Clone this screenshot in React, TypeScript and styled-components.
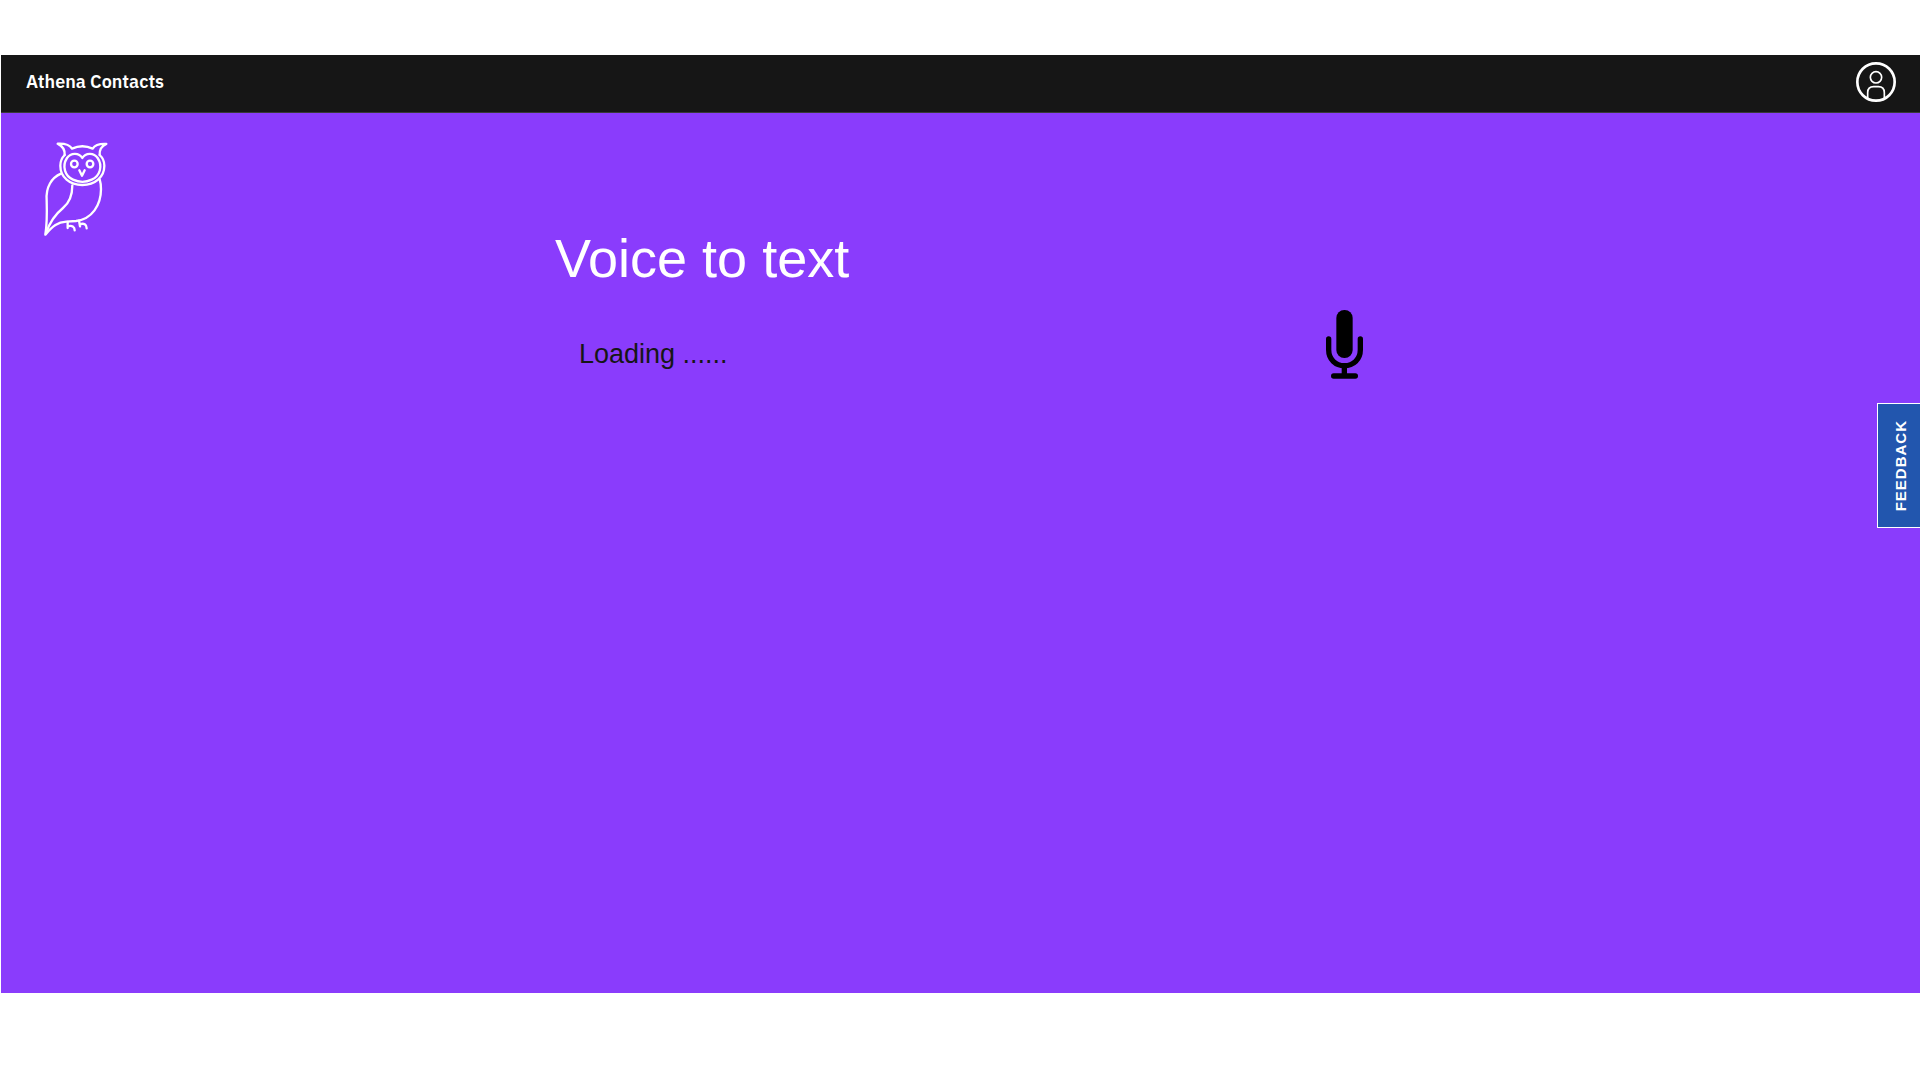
import React from "react";
import styled, { createGlobalStyle } from "styled-components";

const GlobalStyle = createGlobalStyle`
  *, *::before, *::after { box-sizing: border-box; }
  body {
    margin: 0;
    background: #ffffff;
    font-family: "Liberation Sans", Arial, sans-serif;
  }
`;

const Page = styled.div`
  display: flex;
  flex-direction: column;
  min-height: 100vh;
  padding: 55px 0 87px 1px;
`;

const Header = styled.header`
  display: flex;
  align-items: center;
  justify-content: space-between;
  height: 58px;
  padding: 0 24px 4px 25px;
  background: #161616;
  border-bottom: 1px solid #393939;
`;

const Brand = styled.a`
  color: #ffffff;
  font-family: "IBM Plex Sans", "Noto Sans", sans-serif;
  font-size: 18px;
  font-weight: 600;
  line-height: 24px;
  text-decoration: none;
`;

const IconButton = styled.button`
  display: flex;
  padding: 0;
  border: 0;
  background: transparent;
  color: inherit;
  cursor: pointer;
`;

const UserButton = styled(IconButton)`
  color: #ffffff;
`;

const Main = styled.main`
  display: grid;
  grid-template-columns: 554fr 771fr 594fr;
  align-items: start;
  flex: 1;
  background: #8a3cfc;
`;

const LogoLink = styled.a`
  display: flex;
  width: 90px;
  margin: 17px 0 0 29px;
  color: #ffffff;
`;

const Panel = styled.section`
  display: flex;
  flex-direction: column;
  gap: 44px;
  padding-top: 113px;
`;

const Title = styled.h1`
  margin: 0;
  color: #ffffff;
  font-size: 54px;
  font-weight: 400;
  line-height: 64px;
`;

const Status = styled.p`
  margin: 0;
  padding-left: 24px;
  color: #161616;
  font-size: 27px;
  line-height: 40px;
`;

const MicSlot = styled.div`
  padding-top: 197px;
  color: #000000;
`;

const Feedback = styled.button`
  position: fixed;
  top: 403px;
  right: 0;
  display: flex;
  align-items: center;
  justify-content: center;
  width: 43px;
  height: 125px;
  padding: 0 0 0 3px;
  border: 1px solid #ffffff;
  border-right: 0;
  background: #2256ae;
  color: #ffffff;
  font-family: inherit;
  font-size: 15px;
  font-weight: 700;
  line-height: 20px;
  letter-spacing: 1px;
  cursor: pointer;
`;

const FeedbackLabel = styled.span`
  writing-mode: vertical-rl;
  transform: rotate(180deg);
`;

function OwlLogo() {
  return (
    <svg width="90" height="120" viewBox="0 0 270 360" fill="none" stroke="currentColor" strokeWidth="7" strokeLinecap="round" strokeLinejoin="round" aria-hidden="true">
      <path d="M104 75 C105 60 97 48 83 41 C104 40 119 44 126 56 C145 47 169 47 188 56 C195 45 210 41 229 42 C215 48 208 60 209 75" />
      <path d="M104 75 C96 83 91 94 91 107 C91 141 119 165 157 165 C195 165 223 141 223 107 C223 94 218 83 209 75" />
      <path d="M157 84 C147 67 122 68 111 84 C95 109 105 138 129 149 C147 157 168 157 185 149 C210 138 219 108 203 84 C192 68 167 67 157 84 Z" />
      <circle cx="133" cy="102" r="10" />
      <circle cx="180" cy="102" r="10" />
      <path d="M148 121 L156 137 L164 121" />
      <path d="M93 131 C65 143 47 171 50 211 C51 245 52 278 46 314 C69 286 83 277 109 275 L138 273 C186 268 213 225 213 178 C213 165 212 157 209 148" />
      <path d="M127 166 C127 199 119 218 99 234 C77 252 58 279 48 310" />
      <path d="M113 276 L113 294 M113 289 C126 285 134 290 134 301" />
      <path d="M147 272 L150 289 M149 283 C162 278 170 284 170 295" />
    </svg>
  );
}

function UserIcon() {
  return (
    <svg width="40" height="40" viewBox="0 0 120 120" fill="none" stroke="currentColor" aria-hidden="true">
      <circle cx="60" cy="60" r="56" strokeWidth="8" />
      <circle cx="60" cy="46" r="17" strokeWidth="5" />
      <path d="M35 108 V92 C35 79 42 74 53 74 H67 C78 74 85 79 85 92 V108" strokeWidth="5" />
    </svg>
  );
}

function MicIcon() {
  return (
    <svg width="37" height="69" viewBox="0 0 111 207" fill="none" stroke="currentColor" strokeWidth="16" strokeLinecap="round" aria-hidden="true">
      <rect x="31" y="0" width="49" height="144" rx="24" fill="currentColor" stroke="none" />
      <path d="M8 87 V119 C8 148 29 167 55 167 C82 167 103 148 103 119 V87" />
      <path d="M55 168 V196" strokeLinecap="butt" />
      <path d="M23 198 H88" />
    </svg>
  );
}

export default function App() {
  return (
    <>
      <GlobalStyle />
      <Page>
        <Header>
          <Brand href="#">Athena Contacts</Brand>
          <UserButton type="button" aria-label="Account">
            <UserIcon />
          </UserButton>
        </Header>
        <Main>
          <LogoLink href="#" aria-label="Athena">
            <OwlLogo />
          </LogoLink>
          <Panel>
            <Title>Voice to text</Title>
            <Status role="status">Loading ......</Status>
          </Panel>
          <MicSlot>
            <IconButton type="button" aria-label="Start recording">
              <MicIcon />
            </IconButton>
          </MicSlot>
        </Main>
      </Page>
      <Feedback type="button">
        <FeedbackLabel>FEEDBACK</FeedbackLabel>
      </Feedback>
    </>
  );
}
